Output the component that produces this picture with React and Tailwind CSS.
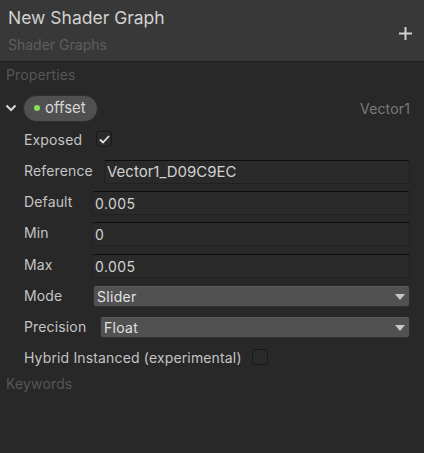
import React from "react";

const font = { fontFamily: "Inter, 'Noto Sans', sans-serif" };

function Label({ children, raise = true }) {
  return (
    <span className={"text-[14px] tracking-[0.15px] text-[#c4c4c4] whitespace-nowrap " + (raise ? "pb-[3px]" : "")}>
      {children}
    </span>
  );
}

function TextField({ value, big }) {
  return (
    <div
      className={
        "flex-1 h-[24px] rounded-[3px] bg-[#2a2a2a] border border-[#212121] border-t-[#0d0d0d] flex items-center text-[#d2d2d2] " +
        (big ? "px-[2px] text-[15px]" : "px-[2px] text-[14px] tracking-[0.45px]")
      }
    >
      {value}
    </div>
  );
}

function Dropdown({ value }) {
  return (
    <div className="flex-1 h-[21px] rounded-[3px] bg-[#515151] border border-[#303030] border-t-[#5a5a5a] flex items-center justify-between pl-[3px] pr-[4px] text-[14px] tracking-[0.3px] text-[#e0e0e0]">
      <span>{value}</span>
      <svg width="10" height="6" viewBox="0 0 10 6">
        <path d="M0 0 L10 0 L5 6 Z" fill="#c8c8c8" />
      </svg>
    </div>
  );
}

function Checkbox({ checked }) {
  return (
    <div className="w-[16px] h-[16px] rounded-[3px] bg-[#2a2a2a] border border-[#191919] flex items-center justify-center">
      {checked && (
        <svg width="11" height="9" viewBox="0 0 11 9">
          <path d="M1 4.5 L4 7.5 L10 1" stroke="#e0e0e0" strokeWidth="1.8" fill="none" />
        </svg>
      )}
    </div>
  );
}

export default function App() {
  return (
    <div style={font} className="w-[424px] h-[453px] bg-[#282828] flex flex-col overflow-hidden">
      <div className="h-[62px] bg-[#383838] border-b border-[#1f1f1f] flex items-start justify-between pl-[8px] pr-[12px] shrink-0">
        <div className="flex flex-col pt-[6px]">
          <span className="text-[17.5px] leading-[24px] text-[#d2d2d2]">New Shader Graph</span>
          <span className="text-[14px] leading-[18px] mt-[6px] text-[#5e5e5e]">Shader Graphs</span>
        </div>
        <svg width="13" height="13" viewBox="0 0 13 13" className="mt-[27px]">
          <rect x="5.5" y="0" width="2" height="13" fill="#d0d0d0" />
          <rect x="0" y="5.5" width="13" height="2" fill="#d0d0d0" />
        </svg>
      </div>
      <div className="pl-[6px] pt-[4px] text-[14px] tracking-[0.15px] leading-[18px] text-[#565656]">Properties</div>
      <div className="flex items-center pl-[5px] pr-[14px] mt-[10px] h-[28px]">
        <svg width="12" height="8" viewBox="0 0 12 8" className="mr-[6px]">
          <path d="M1.5 1.5 L6 6 L10.5 1.5" stroke="#d8d8d8" strokeWidth="2" fill="none" />
        </svg>
        <div className="h-[27px] w-[75px] rounded-full bg-[#505050] border border-[#2f2f2f] flex items-center pl-[10px] gap-[5px]">
          <div className="w-[6px] h-[6px] rounded-full bg-[#84e154]" />
          <span className="text-[15px] text-[#d6d6d6]">offset</span>
        </div>
        <span className="ml-auto text-[14px] tracking-[0.15px] text-[#7a7a7a]">Vector1</span>
      </div>
      <div className="flex flex-col pl-[24px] pr-[14px] mt-[5px]">
        <div className="flex items-center h-[24px] gap-[14px]">
          <Label raise={false}>Exposed</Label>
          <Checkbox checked />
        </div>
        <div className="flex items-center h-[24px] mt-[9px]">
          <div className="w-[80px] flex"><Label>Reference</Label></div>
          <TextField value="Vector1_D09C9EC" big />
        </div>
        <div className="flex items-center h-[24px] mt-[7px]">
          <div className="w-[68px] flex"><Label>Default</Label></div>
          <TextField value="0.005" />
        </div>
        <div className="flex items-center h-[24px] mt-[7px]">
          <div className="w-[68px] flex"><Label>Min</Label></div>
          <TextField value="0" />
        </div>
        <div className="flex items-center h-[24px] mt-[8px]">
          <div className="w-[68px] flex"><Label>Max</Label></div>
          <TextField value="0.005" />
        </div>
        <div className="flex items-center h-[21px] mt-[8px]">
          <div className="w-[69px] flex"><Label>Mode</Label></div>
          <Dropdown value="Slider" />
        </div>
        <div className="flex items-center h-[21px] mt-[10px]">
          <div className="w-[76px] flex"><Label>Precision</Label></div>
          <Dropdown value="Float" />
        </div>
        <div className="flex items-center h-[18px] mt-[10px] gap-[10px]">
          <Label raise={false}>Hybrid Instanced (experimental)</Label>
          <Checkbox />
        </div>
      </div>
      <div className="pl-[6px] mt-[9px] text-[14px] tracking-[0.15px] leading-[18px] text-[#565656]">Keywords</div>
    </div>
  );
}
